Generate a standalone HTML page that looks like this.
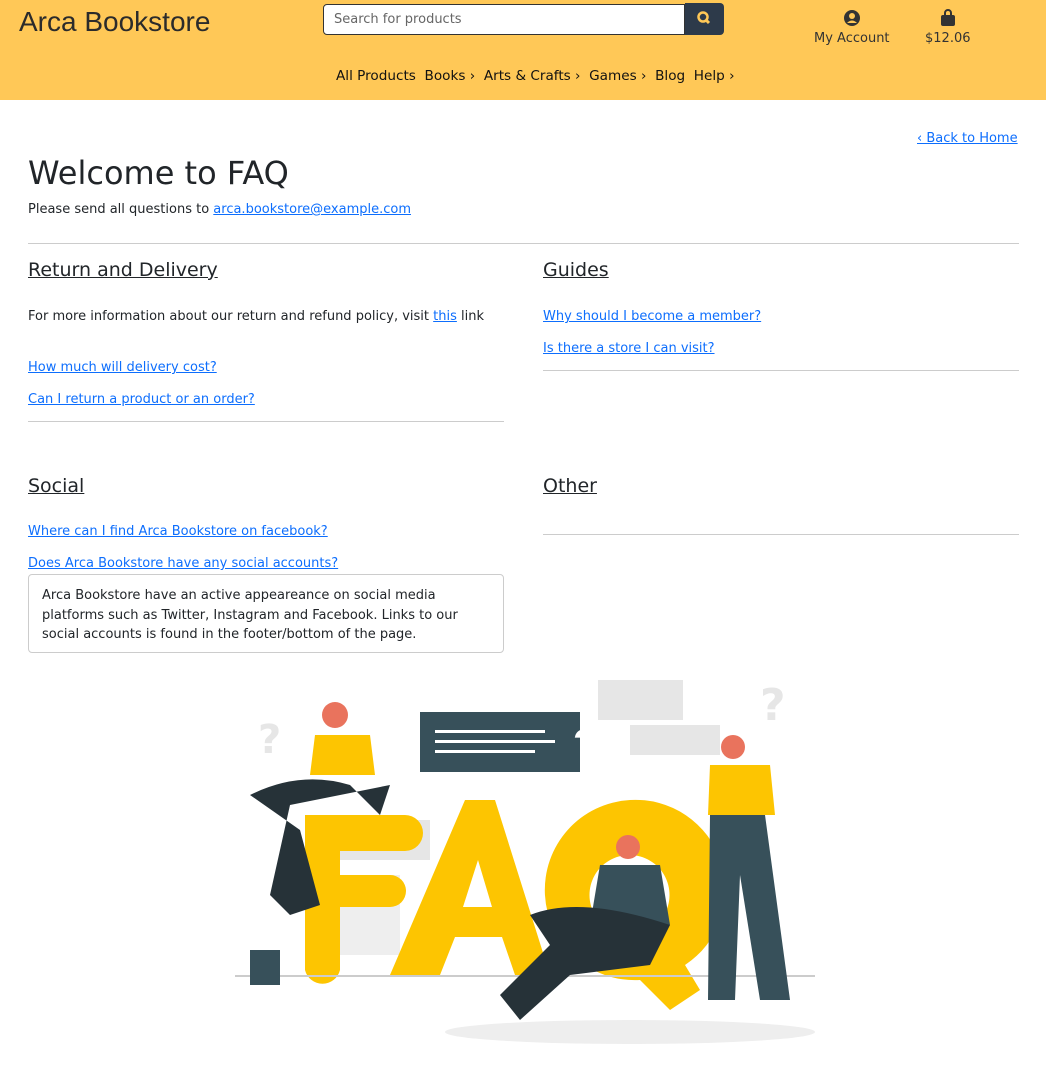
<!DOCTYPE html>
<html><head><meta charset="utf-8"><style>
body{margin:0;background:#fff;font-family:"DejaVu Sans",sans-serif;color:#212529;width:1046px;height:1080px;overflow:hidden;position:relative}
.hdr{position:absolute;left:0;top:0;width:1046px;height:100px;background:#ffc857}
.logo{position:absolute;left:19px;top:6px;font-family:"Liberation Sans",sans-serif;font-size:28px;color:#2b2b2b}
.search{position:absolute;left:323px;top:4px;width:362px;height:31px;border:1px solid #333;border-radius:4px 0 0 4px;background:#fff;font-size:13px;color:#666;line-height:29px;padding-left:10px;box-sizing:border-box}
.sbtn{position:absolute;left:685px;top:3px;width:39px;height:32px;background:#2d3a4a;border-radius:0 4px 4px 0}
.acc{position:absolute;top:9px;font-size:13px;color:#333;text-align:center}
.nav{position:absolute;top:68px;left:336px;font-family:"DejaVu Sans",cursive;font-size:13.6px;color:#111}
a{color:#0d6efd;text-decoration:underline}
.t{position:absolute}
h1{position:absolute;left:28px;top:154px;margin:0;font-weight:400;font-size:32px}
h2{position:absolute;margin:0;font-weight:400;font-size:19px;text-decoration:underline}
.hr{position:absolute;height:1px;background:#ccc}
.sm{font-size:13px}
</style></head><body>
<div class="hdr">
<div class="logo">Arca Bookstore</div>
<div class="search">Search for products</div>
<div class="sbtn"><svg width="39" height="32"><circle cx="18" cy="14" r="4.5" stroke="#ffc857" stroke-width="2.5" fill="none"/><line x1="21" y1="17" x2="24" y2="20" stroke="#ffc857" stroke-width="3"/></svg></div>
<div class="acc" style="left:814px"><svg width="18" height="18"><circle cx="9" cy="9" r="8" fill="#333"/><circle cx="9" cy="7" r="3" fill="#ffc857"/><path d="M4 14 Q9 9 14 14" fill="#ffc857"/></svg><br>My Account</div>
<div class="acc" style="left:925px"><svg width="18" height="18"><rect x="2" y="6" width="14" height="11" rx="2" fill="#333"/><path d="M6 7 V4 a3 3 0 0 1 6 0 V7" stroke="#333" stroke-width="2" fill="none"/></svg><br>$12.06</div>
<div class="nav">All Products &nbsp;Books › &nbsp;Arts &amp; Crafts › &nbsp;Games › &nbsp;Blog &nbsp;Help ›</div>
</div>
<a class="t sm" style="left:917px;top:131px">‹ Back to Home</a>
<h1>Welcome to FAQ</h1>
<div class="t sm" style="left:28px;top:202px">Please send all questions to <a>arca.bookstore@example.com</a></div>
<div class="hr" style="left:28px;top:243px;width:991px"></div>
<h2 style="left:28px;top:259px">Return and Delivery</h2>
<h2 style="left:543px;top:259px">Guides</h2>
<div class="t sm" style="left:28px;top:309px">For more information about our return and refund policy, visit <a>this</a> link</div>
<a class="t sm" style="left:28px;top:360px">How much will delivery cost?</a>
<a class="t sm" style="left:28px;top:392px">Can I return a product or an order?</a>
<div class="hr" style="left:28px;top:421px;width:476px"></div>
<a class="t sm" style="left:543px;top:309px">Why should I become a member?</a>
<a class="t sm" style="left:543px;top:341px">Is there a store I can visit?</a>
<div class="hr" style="left:543px;top:370px;width:476px"></div>
<h2 style="left:28px;top:475px">Social</h2>
<h2 style="left:543px;top:475px">Other</h2>
<div class="hr" style="left:543px;top:534px;width:476px"></div>
<a class="t sm" style="left:28px;top:524px">Where can I find Arca Bookstore on facebook?</a>
<a class="t sm" style="left:28px;top:556px">Does Arca Bookstore have any social accounts?</a>
<div class="t sm" style="left:28px;top:574px;width:476px;height:79px;border:1px solid #ccc;border-radius:4px;box-sizing:border-box;padding:11px 13px;line-height:19.5px">Arca Bookstore have an active appeareance on social media platforms such as Twitter, Instagram and Facebook. Links to our social accounts is found in the footer/bottom of the page.</div>
<svg class="t" style="left:230px;top:675px" width="590" height="380">
<ellipse cx="400" cy="357" rx="185" ry="12" fill="#eee"/>
<rect x="368" y="5" width="85" height="40" fill="#e6e6e6"/><rect x="400" y="50" width="90" height="30" fill="#e6e6e6"/>
<rect x="190" y="37" width="160" height="60" fill="#37505a"/><text x="343" y="82" font-size="40" fill="#fff" font-family="Liberation Sans" font-weight="bold">?</text>
<rect x="205" y="55" width="110" height="3" fill="#fff"/><rect x="205" y="65" width="120" height="3" fill="#fff"/><rect x="205" y="75" width="100" height="3" fill="#fff"/>
<text x="28" y="78" font-size="40" fill="#e6e6e6" font-weight="bold">?</text><text x="530" y="45" font-size="44" fill="#e6e6e6" font-weight="bold">?</text>
<rect x="110" y="145" width="90" height="40" fill="#e6e6e6"/><rect x="100" y="200" width="70" height="80" fill="#eee"/>
<path d="M75 140 H175 A18 18 0 0 1 175 176 H110 V200 H160 A16 16 0 0 1 160 232 H110 V295 A18 18 0 0 1 75 295 Z" fill="#fdc501"/>
<path d="M160 300 L235 125 H265 L320 300 H285 L272 262 H225 L210 300 Z M233 232 H262 L248 185 Z" fill="#fdc501"/>
<path d="M400 125 A90 90 0 1 0 410 305 L440 335 L470 315 L455 290 A90 90 0 0 0 400 125 Z M400 180 A40 40 0 1 1 399 180 Z" fill="#fdc501"/>
<rect x="5" y="300" width="580" height="2" fill="#ccc"/>
<path d="M20 120 Q70 95 120 110 L150 140 L160 110 L60 130 L40 220 L60 240 L90 230 L70 155 Z" fill="#263238"/>
<circle cx="105" cy="40" r="13" fill="#e9735d"/><path d="M85 60 H140 L145 100 H80 Z" fill="#fdc501"/>
<rect x="20" y="275" width="30" height="35" fill="#37505a"/>
<circle cx="503" cy="72" r="12" fill="#e9735d"/><path d="M480 90 H540 L545 140 H478 Z" fill="#fdc501"/>
<path d="M480 140 H535 L560 325 H530 L510 200 L505 325 H478 Z" fill="#37505a"/>
<circle cx="398" cy="172" r="12" fill="#e9735d"/><path d="M370 190 H430 L440 250 H360 Z" fill="#37505a"/>
<path d="M300 240 Q350 220 440 250 L420 290 L340 300 L290 345 L270 320 L320 270 Z" fill="#263238"/>
</svg>
</body></html>
